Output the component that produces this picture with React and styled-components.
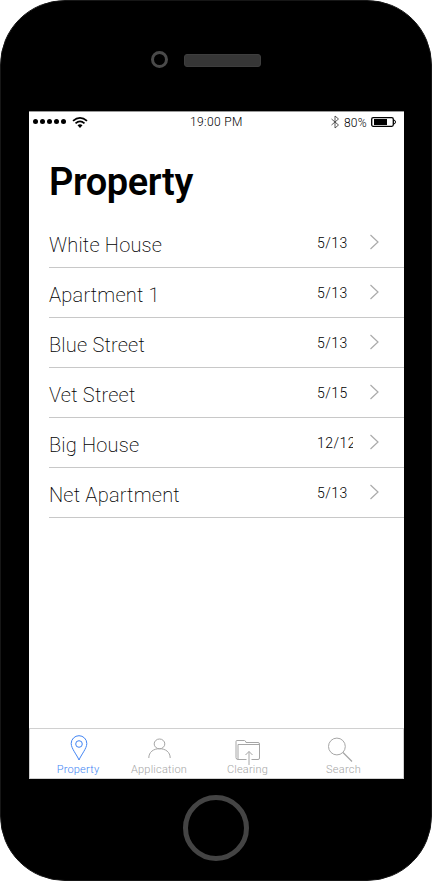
import React from 'react';
import styled, { createGlobalStyle } from 'styled-components';

const GlobalStyle = createGlobalStyle`
  * { box-sizing: border-box; }
  body { margin: 0; background: #fff; font-family: Roboto, "Liberation Sans", sans-serif; }
`;

const Phone = styled.main`
  display: flex;
  flex-direction: column;
  width: 432px;
  height: 881px;
  padding: 0 27px 0 28px;
  background: #000;
  border: 1px solid #161616;
  border-radius: 65px;
`;

const Earpiece = styled.header`
  display: flex;
  align-items: flex-start;
  gap: 16px;
  height: 110px;
  flex: none;
  padding: 50px 0 0 122px;
`;

const Camera = styled.div`
  width: 17px;
  height: 17px;
  border: 3px solid #4a4a4a;
  border-radius: 50%;
`;

const Speaker = styled.div`
  width: 77px;
  height: 13px;
  margin-top: 3px;
  background: #363636;
  border: 1px solid #3e3e3e;
  border-radius: 3px;
`;

const Screen = styled.section`
  display: flex;
  flex-direction: column;
  width: 375px;
  height: 668px;
  flex: none;
  background: #fff;
  border-top: 1px solid #999;
`;

const StatusBar = styled.div`
  display: grid;
  grid-template-columns: 161px 141px 13px 27px 1fr;
  height: 48px;
  padding-top: 2px;
`;

const Signal = styled.svg`
  display: block;
  width: 62px;
  height: 18px;
`;

const StatusText = styled.span`
  padding-top: ${(p) => p.$drop || 0}px;
  font-size: 12px;
  font-weight: 300;
  line-height: 16px;
  letter-spacing: ${(p) => p.$spacing || 0}px;
  white-space: nowrap;
`;

const StatusIcon = styled.svg`
  display: block;
  width: ${(p) => p.$width}px;
  height: 18px;
`;

const Title = styled.h1`
  height: 58px;
  margin: 0;
  padding-left: 20px;
  font-size: 38px;
  font-weight: 600;
  line-height: 44px;
  letter-spacing: -0.4px;
`;

const List = styled.ul`
  flex: 1;
  margin: 0;
  padding: 0 0 0 20px;
  list-style: none;
`;

const Row = styled.li`
  display: flex;
  align-items: flex-start;
  height: 50px;
  padding-top: 15px;
  border-bottom: 1px solid #c8c8c8;
`;

const Name = styled.span`
  width: 268px;
  font-size: 20px;
  font-weight: 200;
  line-height: 24px;
  letter-spacing: 0.2px;
`;

const Count = styled.span`
  width: 36px;
  overflow: hidden;
  color: #000;
  font-size: 14px;
  font-weight: 300;
  line-height: 20px;
  letter-spacing: 0.5px;
  white-space: nowrap;
`;

const Chevron = styled.svg`
  width: 12px;
  height: 18px;
  margin-left: 16px;
`;

const TabBar = styled.nav`
  display: grid;
  grid-template-columns: 80px 82px 95px 97px;
  height: 51px;
  flex: none;
  padding-left: 8px;
  border: 1px solid #d0d0d0;
`;

const Tab = styled.div`
  display: flex;
  flex-direction: column;
  align-items: center;
  color: ${(p) => (p.$active ? '#4285f4' : '#a6a6a6')};
`;

const TabIcon = styled.svg`
  width: 40px;
  height: 34px;
  flex: none;
  overflow: visible;
  fill: none;
  stroke: currentColor;
  stroke-width: 1;
`;

const TabLabel = styled.span`
  font-size: 11px;
  font-weight: 300;
  line-height: 14px;
  letter-spacing: ${(p) => p.$spacing}px;
`;

const HomeArea = styled.footer`
  display: flex;
  justify-content: center;
  padding: 16px 1px 0 0;
`;

const HomeButton = styled.div`
  width: 66px;
  height: 66px;
  border: 5px solid #444;
  border-radius: 50%;
`;

const properties = [
  ['White House', '5/13'],
  ['Apartment 1', '5/13'],
  ['Blue Street', '5/13'],
  ['Vet Street', '5/15'],
  ['Big House', '12/12'],
  ['Net Apartment', '5/13'],
];

const tabs = [
  {
    label: 'Property',
    active: true,
    spacing: 0.2,
    icon: (
      <>
        <path d="M21 31 C19 26 13.2 19.500 13.200 14.500 A7.800 7.800 0 0 1 28.800 14.500 C28.800 19.500 23 26 21 31Z" />
        <circle cx="21" cy="15" r="3.300" />
      </>
    ),
  },
  {
    label: 'Application',
    spacing: 0.2,
    icon: (
      <>
        <ellipse cx="20.500" cy="14.900" rx="5.300" ry="4.900" />
        <path d="M9.800 29 C9.800 23 14.500 19.700 20.500 19.700 S31.200 23 31.200 29" />
      </>
    ),
  },
  {
    label: 'Clearing',
    spacing: 0.2,
    icon: (
      <>
        <path d="M10 30.500 Q8 30.500 8 28.500 V12.500 Q8 11.500 9 11.500 H16.500 Q17.500 11.500 18 13.500 H30 Q31.500 13.500 31.500 15 V29 Q31.500 30.500 30 30.500 H23.500 M18.500 30.500 H10 V15.500 H31.500" />
        <path d="M21 36 V22.500 M17.500 26 L21 22.500 L24.500 26" />
      </>
    ),
  },
  {
    label: 'Search',
    spacing: 0.3,
    icon: (
      <>
        <circle cx="12.900" cy="17.500" r="8.400" />
        <path d="M19 23.500 L28 32.500" strokeWidth="1.300" />
      </>
    ),
  },
];

export default function App() {
  return (
    <>
      <GlobalStyle />
      <Phone>
        <Earpiece>
          <Camera />
          <Speaker />
        </Earpiece>
        <Screen>
          <StatusBar>
            <Signal viewBox="0 0 62 18">
              {[6.5, 13.5, 20.5, 27.5, 34.5].map((x) => (
                <circle key={x} cx={x} cy="7.500" r="2.500" />
              ))}
              <g fill="none" stroke="#000" strokeWidth="1.700">
                <path d="M44 6.800 Q51 .800 58 6.800" />
                <path d="M46.500 9.300 Q51 5.300 55.500 9.300" />
              </g>
              <path d="M48.500 11.300 Q51 9.300 53.500 11.300 L51 14Z" />
            </Signal>
            <StatusText $spacing={0.35}>19:00 PM</StatusText>
            <StatusIcon $width={13} viewBox="0 0 13 18">
              <path d="M.500 5 L7.500 11 L4 14 V2 L7.500 5 L.500 11" fill="none" stroke="#333" strokeWidth=".8" />
            </StatusIcon>
            <StatusText $drop={1} $spacing={0.2}>80%</StatusText>
            <StatusIcon $width={27} viewBox="0 0 27 18">
              <rect x=".7" y="3.700" width="21.600" height="8.600" rx="1.500" fill="none" stroke="#000" strokeWidth="1.300" />
              <rect x="3" y="5" width="13" height="6" />
              <path d="M22.500 6 Q24.500 6 24.500 8 T22.500 10" fill="none" stroke="#000" />
            </StatusIcon>
          </StatusBar>
          <Title>Property</Title>
          <List>
            {properties.map(([name, count]) => (
              <Row key={name}>
                <Name>{name}</Name>
                <Count>{count}</Count>
                <Chevron viewBox="0 0 12 18">
                  <path d="M1.500 2 L9 9 L1.500 16" fill="none" stroke="#aaa" strokeWidth="1.200" />
                </Chevron>
              </Row>
            ))}
          </List>
          <TabBar>
            {tabs.map(({ label, active, spacing, icon }) => (
              <Tab key={label} $active={active}>
                <TabIcon viewBox="0 0 40 34">{icon}</TabIcon>
                <TabLabel $spacing={spacing}>{label}</TabLabel>
              </Tab>
            ))}
          </TabBar>
        </Screen>
        <HomeArea>
          <HomeButton />
        </HomeArea>
      </Phone>
    </>
  );
}
